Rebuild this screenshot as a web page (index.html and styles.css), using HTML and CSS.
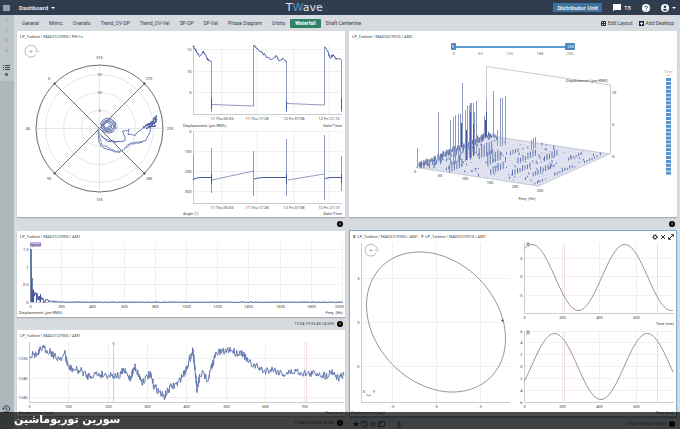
FILE: index.html
```html
<!DOCTYPE html>
<html lang="en">
<head>
    <meta charset="utf-8">
    <title>TWave - Dashboard</title>
    <link rel="stylesheet" href="styles.css">
</head>
<body>
<header class="topbar">
    <div class="topbar-left">
        <button class="icon-btn" aria-label="Menu"><svg class="menu" viewBox="0 0 7 6"><path d="M0 1h7M0 3h7M0 5h7"/></svg></button>
        <button class="board-name">Dashboard <span class="caret"></span></button>
    </div>
    <div class="logo">T<span>W</span>ave</div>
    <div class="topbar-right">
        <button class="unit">Distributor Unit</button>
        <button class="messages"><svg viewBox="0 0 8 7"><path d="M0 0h8v6H2L0 7z"/></svg>T8</button>
        <button class="icon-btn" aria-label="Help"><svg viewBox="0 0 8 8"><circle cx="4" cy="4" r="4"/><path class="cut" d="M2.7 3.2a1.3 1.2 0 1 1 1.9 1.1q-.6.3-.6.9M4 6v.8"/></svg></button>
        <button class="icon-btn user" aria-label="Account"><svg viewBox="0 0 8 8"><circle cx="4" cy="4" r="4"/><circle class="hole" cx="4" cy="2.8" r="1.3"/><path class="hole" d="M1.6 5.8q2.4-2 4.8 0Q4 8 1.6 5.8z"/></svg><span class="caret"></span></button>
    </div>
</header>
<div class="shell">
    <aside class="side">
        <div class="side-top">
            <i class="mark olive"></i>
            <i class="mark green"></i>
            <i class="mark red"></i>
            <i class="mark blue"></i>
            <svg class="side-list" viewBox="0 0 7 5"><path d="M0 .5h1M2 .5h5M0 2.5h1M2 2.5h5M0 4.5h1M2 4.5h5"/></svg>
            <i class="mark dark"></i>
        </div>
        <svg class="side-history" viewBox="0 0 8 8"><path d="M1.2 4a3.2 3.2 0 1 1 1 2.3M0 3.4l1.2 1.2 1.2-1.2M4.3 2.2v2l1.5 1"/></svg>
    </aside>
    <main class="main">
        <nav class="tabs">
            <button>General</button>
            <button>Mimic</button>
            <button>Overalls</button>
            <button>Trend_OV-DP</button>
            <button>Trend_OV-Vel</button>
            <button>SP-DP</button>
            <button>SP-Vel</button>
            <button>Phase Diagram</button>
            <button>Orbits</button>
            <button class="active">Waterfall</button>
            <button>Shaft Centerline</button>
            <div class="tab-tools">
                <button><svg viewBox="0 0 5 5"><path d="M.5.5h4v4h-4zM.5 2.5h4M2.5.5v4"/></svg>Edit Layout</button>
                <button><svg viewBox="0 0 5 5"><path class="solid" d="M0 0h5v5H0z"/><path class="plus" d="M2.5 1v3M1 2.5h3"/></svg>Add Desktop</button>
            </div>
        </nav>
        <div class="board">
            <div class="column">
                <section class="card">
                    <h2>LP_Turbine / MAD31CY005 / PH-1x</h2>
                    <svg class="chart" id="phase" viewBox="17 42 328 175"></svg>
                </section>
                <div class="foot tall"><button class="info">i</button></div>
                <section class="card">
                    <h2>LP_Turbine / MAD31CY005 / AM1</h2>
                    <svg class="chart" id="spectrum" viewBox="17 242 328 75"></svg>
                </section>
                <div class="foot"><span>13:04:19 03:43:14.593</span><button class="info">i</button></div>
                <section class="card">
                    <h2>LP_Turbine / MAD31CY005 / AM1</h2>
                    <svg class="chart" id="wave" viewBox="17 341 328 75"></svg>
                </section>
                <div class="foot"><span>13:04:19 03:43:14.593</span><button class="info">i</button></div>
            </div>
            <div class="column">
                <section class="card">
                    <h2>LP_Turbine / MAD32CY010 / AM2</h2>
                    <div class="range">
                        <div class="range-track">
                            <input type="range" min="0" max="250" value="0" aria-label="From frequency">
                            <input type="range" class="to" min="0" max="250" value="250" aria-label="To frequency">
                            <span class="from-val">0</span><span class="to-val">250</span>
                        </div>
                        <div class="range-ticks"><span>0</span><span>63</span><span>125</span><span>188</span><span>250</span></div>
                    </div>
                    <svg class="chart" id="waterfall" viewBox="349 58 328 159"></svg>
                </section>
                <div class="foot"><button class="info">i</button></div>
                <section class="card selected">
                    <div class="card-head">
                        <h2><b>X</b>LP_Turbine / MAD31CY005 / AM1</h2>
                        <h2><b>Y</b>LP_Turbine / MAD31CY010 / AM1</h2>
                        <div class="card-tools">
                            <button aria-label="Settings"><svg viewBox="0 0 6 6"><circle class="gear" cx="3" cy="3" r="2.4"/><circle cx="3" cy="3" r="1.6"/></svg></button>
                            <button aria-label="Close"><svg viewBox="0 0 6 6"><path d="M1 1l4 4M5 1L1 5"/></svg></button>
                            <button aria-label="Expand"><svg viewBox="0 0 6 6"><path d="M1 5l4-4M3.2.6h2.2v2.2M.6 3.2v2.2h2.2"/></svg></button>
                        </div>
                    </div>
                    <svg class="chart" id="orbit" viewBox="350 242 326 174"></svg>
                </section>
                <div class="foot">
                    <svg class="foot-icons" viewBox="0 0 50 8"><path class="solid" d="M3 1l1 2h2L4.500 4.500 5 6.500 3 5.400 1 6.500l.500-2L0 3h2z"/><path d="M8.500 4a3 3 0 1 0 1-2M8.500 1v2h2M12 2.500V4l1 1M18 4a2 2 0 0 1 4 0 2 2 0 0 1-4 0M25.500 1.500h6v5h-6zM27 5V3h2M46 1v4M44 3.500l2 2 2-2M43.500 7h5"/></svg>
                    <span>13:04:19 03:43:14.593</span><button class="info">i</button>
                </div>
            </div>
        </div>
    </main>
</div>
<div class="caption" lang="fa" dir="rtl">سورین توربوماشین</div>
<script src="charts.js"></script>
</body>
</html>
```

FILE: styles.css
```css
* {
    box-sizing: border-box;
}

body {
    margin: 0;
    min-height: 100vh;
    display: flex;
    flex-direction: column;
    font-family: Roboto, "Liberation Sans", sans-serif;
    font-size: 5px;
    line-height: 6px;
    color: #3a4048;
    background: #d7dadf;
}

button {
    border: 0;
    padding: 0;
    background: none;
    color: inherit;
    font: inherit;
    display: flex;
    align-items: center;
    gap: 3px;
    white-space: nowrap;
}

svg {
    display: block;
}

/* top bar */
.topbar {
    height: 15px;
    padding: 0 4px 0 3px;
    display: flex;
    justify-content: space-between;
    align-items: center;
    background: #303d4f;
    color: #fff;
}

.topbar-left {
    display: flex;
    gap: 9px;
}

.topbar-right {
    display: flex;
    align-items: center;
    gap: 11px;
}

.menu {
    width: 7px;
    height: 6px;
    stroke: #fff;
}

.board-name {
    font-size: 6px;
    font-weight: 500;
}

.caret {
    border: 2px solid transparent;
    border-top-color: #fff;
    border-bottom: 0;
}

.logo {
    font-family: "DejaVu Sans", sans-serif;
    font-size: 11px;
    line-height: 14px;
    color: #dfe5ea;
}

.logo span {
    color: #4f9cc4;
}

.unit {
    height: 9px;
    padding: 0 4px;
    background: #3f719d;
    font-size: 6px;
    font-weight: 500;
}

.messages {
    font-size: 6px;
}

.messages svg {
    width: 8px;
    height: 7px;
    fill: #fff;
}

.icon-btn svg {
    width: 8px;
    height: 8px;
    fill: #fff;
}

.icon-btn .menu {
    width: 7px;
    height: 6px;
}

.icon-btn .cut {
    fill: none;
    stroke: #303d4f;
}

.icon-btn .hole {
    fill: #303d4f;
}

/* side bar */
.shell {
    flex: 1;
    display: flex;
}

.side {
    width: 14px;
    display: flex;
    flex-direction: column;
    justify-content: space-between;
    background: #aeb8bc;
}

.side-top {
    height: 66px;
    padding: 4px 5px;
    display: flex;
    flex-direction: column;
    gap: 7px;
    background: #bcc5c8;
}

.side-list {
    width: 7px;
    height: 5px;
    margin: 6px -2px 0;
    stroke: #39444c;
}

.side-history {
    width: 8px;
    height: 8px;
    margin: 0 2px 17px;
    fill: none;
    stroke: #2e4656;
}

.mark {
    width: 3px;
    height: 3px;
    flex: none;
    border-radius: 1px;
}

.olive { background: #b5b98e; }
.green { background: #a5c09a; }
.red { background: #c9a58f; }
.blue { background: #8fb9d3; }
.dark { background: #56646d; margin-top: -4px; }

/* tabs */
.main {
    flex: 1;
    min-width: 0;
    padding: 0 3px;
}

.tabs {
    height: 16px;
    display: flex;
    align-items: center;
}

.tabs button {
    height: 9px;
    padding: 0 5px;
    border-radius: 1px;
}

.tabs .active {
    background: #2f8262;
    color: #fff;
    font-weight: 700;
}

.tab-tools {
    margin-left: auto;
    display: flex;
}

.tabs .tab-tools button {
    padding: 0 3px;
    gap: 2px;
}

.tab-tools svg {
    width: 5px;
    height: 5px;
    fill: none;
    stroke: #2b333c;
}

.tab-tools .solid {
    fill: #1f2730;
    stroke: none;
}

.tab-tools .plus {
    stroke: #fff;
}

/* cards */
.board {
    display: grid;
    grid-template-columns: 1fr 1fr;
    gap: 4px;
}

.card {
    background: #fff;
    box-shadow: 0 1px 1px #a9acb0;
}

.selected {
    border: 1px solid #7fadd0;
}

h2 {
    margin: 0;
    height: 11px;
    padding: 0 3px;
    font-size: 4px;
    line-height: 12px;
    font-weight: 400;
    white-space: nowrap;
}

h2 b {
    margin-right: 2px;
}

.card-head {
    display: flex;
}

.card-head h2 {
    padding: 0 0 0 3px;
}

.card-tools {
    margin-left: auto;
    padding-right: 2px;
    display: flex;
    gap: 2px;
}

.card-tools svg {
    width: 6px;
    height: 6px;
    fill: none;
    stroke: #333;
}

.card-tools .gear {
    stroke-dasharray: 1 1;
}

.chart {
    width: 100%;
    height: auto;
}

.foot {
    height: 13px;
    padding: 0 2px 0 4px;
    display: flex;
    align-items: center;
    justify-content: flex-end;
    gap: 3px;
    font-size: 4px;
}

.tall {
    height: 14px;
}

.foot-icons {
    width: 50px;
    height: 8px;
    margin-right: auto;
    fill: none;
    stroke: #555;
}

.foot-icons .solid {
    fill: #444;
    stroke: none;
}

.info {
    width: 6px;
    height: 6px;
    border-radius: 50%;
    justify-content: center;
    background: #000;
    color: #fff;
    font-size: 4px;
    font-weight: 700;
}

/* frequency range */
.range {
    width: 38%;
    height: 16px;
    margin-left: 31%;
}

.range-track {
    position: relative;
    height: 9px;
    display: flex;
    align-items: center;
    justify-content: space-between;
    color: #fff;
    font-size: 4px;
}

.range-track::before {
    content: "";
    position: absolute;
    left: 2px;
    right: 2px;
    top: 4px;
    height: 2px;
    background: #5b9bd5;
}

.range-track input {
    position: absolute;
    left: 0;
    top: 0;
    width: 100%;
    height: 9px;
    margin: 0;
    appearance: none;
    background: none;
    pointer-events: none;
}

.range-track input::-webkit-slider-thumb {
    appearance: none;
    width: 5px;
    height: 7px;
    border-radius: 1px;
    background: #4a86c0;
    pointer-events: auto;
}

.range-track .to::-webkit-slider-thumb {
    width: 10px;
}

.range-track span {
    position: relative;
    padding: 0 1px;
    pointer-events: none;
}

.range-ticks {
    display: flex;
    justify-content: space-between;
    padding: 0 2px;
    font-size: 4px;
    color: #777;
}

/* chart parts */
.chart text {
    font-size: 4px;
    fill: #444;
}

.chart .italic {
    font-style: italic;
}

.chart .faint {
    fill: #d09a8a;
}

.chart path {
    fill: none;
    stroke-linejoin: round;
}

.grid { stroke: #f0f0f3; stroke-width: 1; }
.axis { stroke: #c9ccd2; stroke-width: 1; }
.ring { stroke: #e6e6e8; stroke-width: 1; }
.dark-line { stroke: #6c6c70; stroke-width: 1; }
.line { stroke: #6478b0; stroke-width: 1; }
.thin { stroke: #8f9bc0; stroke-width: 1; }
.dense { stroke: #45589f; stroke-width: 1; }
.curve { stroke: #94949c; stroke-width: 1; }
.pink { stroke: #f3dbe3; stroke-width: 1; }
.cursor { stroke: #cfcfd4; stroke-width: 1; }
.mesh { stroke: #d6d9ea; stroke-width: 1; }
.floor { fill: #eceef6; }
.tag { fill: #c9b6ea; }
.axis-tag { fill: #d5d5d8; }
.time-cell { fill: #4f94cf; }
.dot { fill: #333; }
.rotor { stroke: #b5b5b8; stroke-width: 1; }

/* bottom caption */
.caption {
    position: fixed;
    left: 0;
    right: 0;
    bottom: 0;
    height: 17px;
    padding: 0 14px;
    background: rgba(0, 0, 0, .7);
    color: #fff;
    font-family: "DejaVu Sans", sans-serif;
    font-size: 11px;
    font-weight: 700;
    line-height: 15px;
    text-align: end;
}
```

FILE: charts.js
```js
var NS = 'http://www.w3.org/2000/svg';
var seed = 7;

function rnd() {
    seed = (seed * 16807) % 2147483647;
    return seed / 2147483647;
}

function add(id, tag, attrs, text) {
    var el = document.createElementNS(NS, tag);
    for (var k in attrs) el.setAttribute(k, attrs[k]);
    if (text !== undefined) el.textContent = text;
    document.getElementById(id).appendChild(el);
}

function path(id, cls, d) {
    add(id, 'path', {'class': cls, d: d});
}

function label(id, x, y, text, anchor, cls) {
    add(id, 'text', {x: x, y: y, 'text-anchor': anchor || 'middle', 'class': cls || ''}, text);
}

function poly(pts) {
    return 'M' + pts.map(function (p) { return p[0].toFixed(1) + ' ' + p[1].toFixed(1); }).join('L');
}

// walk along the key points and shake every step by amp
function noisy(keys, amp, step) {
    var out = [];
    for (var i = 0; i < keys.length - 1; i++) {
        var a = keys[i], b = keys[i + 1];
        var n = Math.max(1, Math.round(Math.hypot(b[0] - a[0], b[1] - a[1]) / step));
        for (var j = 0; j < n; j++) {
            out.push([a[0] + (b[0] - a[0]) * j / n, a[1] + (b[1] - a[1]) * j / n + (rnd() - .5) * amp * 2]);
        }
    }
    out.push(keys[keys.length - 1]);
    return out;
}

// plot frame: b = [left, top, right, bottom], xs and ys = [[position, label], ...]
function frame(id, b, xs, ys) {
    xs.forEach(function (t) {
        if (t[0] > b[0]) path(id, 'grid', 'M' + t[0] + ' ' + b[1] + 'V' + b[3]);
        // a label on the right edge is kept inside the plot
        var edge = t[0] > b[2] - 4;
        label(id, edge ? b[2] + 1 : t[0], b[3] + 5, t[1], edge ? 'end' : 'middle');
    });
    ys.forEach(function (t) {
        if (t[0] < b[3]) path(id, 'grid', 'M' + b[0] + ' ' + t[0] + 'H' + b[2]);
        label(id, b[0] - 2, t[0] + 1, t[1], 'end');
    });
    path(id, 'axis', 'M' + b[0] + ' ' + b[1] + 'V' + b[3] + 'H' + b[2]);
}

function rotor(id, x, y) {
    path(id, 'rotor', 'M' + (x + 5) + ' ' + (y + 3) + 'A6 6 0 1 1 ' + (x + 6) + ' ' + (y - 1) + 'M' + (x + 4) + ' ' + (y - 1) + 'l2 2 2-2M' + (x - 1.5) + ' ' + y + 'h3M' + x + ' ' + (y - 1.5) + 'v3');
}

// ---- phase diagram
(function () {
    var id = 'phase', cx = 99.5, cy = 128.5;
    rotor(id, 31, 51.5);
    [18, 36, 54].forEach(function (r) {
        add(id, 'circle', {cx: cx, cy: cy, r: r, 'class': 'ring', fill: 'none'});
    });
    path(id, 'ring', 'M36 128.5H163M99.5 65V192');
    add(id, 'circle', {cx: cx, cy: cy, r: 63.5, 'class': 'dark-line', fill: 'none'});
    path(id, 'dark-line', 'M54.500 83.500l90 90M144.500 83.500l-90 90');
    [[54.5, 83.5], [144.5, 83.5], [54.5, 173.5], [144.5, 173.5]].forEach(function (p) {
        add(id, 'circle', {cx: p[0], cy: p[1], r: 1, 'class': 'dot'});
    });
    [[99.5, 59, '315'], [49, 80, '0'], [149, 80, '270'], [28, 130, '45'], [170, 130, '225'],
        [49, 180, '90'], [149, 180, '180'], [99.5, 201, '135'],
        [99.5, 76, '15'], [99.5, 94, '10'], [99.5, 112, '5']].forEach(function (t) {
        label(id, t[0], t[1], t[2]);
    });
    var sp = [];
    for (var a = 0; a < 34; a += .3) {
        var r = 1.5 + a * .18 + rnd() * 1.5;
        sp.push([107 + a * .05 + r * Math.cos(a), 125.5 + r * Math.sin(a) * .9]);
    }
    path(id, 'line', poly(sp));
    path(id, 'line', poly(noisy([[98, 129], [99, 142], [102, 147], [115, 152], [123, 150], [129, 144], [138, 143], [146, 140], [150, 132], [151, 126]], .5, 2)));
    path(id, 'thin', poly(noisy([[98, 131], [102, 145], [112, 149], [119, 153], [127, 147], [132, 143], [144, 141]], .5, 2)));
    path(id, 'line', poly(noisy([[98, 131], [103, 138], [110, 141], [119, 142], [125, 140], [125, 136], [122, 131], [129, 130], [128, 135], [135, 135], [141, 130], [147, 125]], .7, 2)));
    path(id, 'line', poly(noisy([[102, 136], [108, 142], [118, 141]], 1, 2)));
    path(id, 'dense', poly(noisy([[143, 127], [157, 122], [146, 128], [156, 125], [149, 126], [157, 120], [153, 118], [157, 115], [155, 120], [147, 125], [155, 122]], 1.5, 1)));

    var xs = [[222, '11 Thu 05:55'], [257, '11 Thu 17:28'], [294, '12 Fri 07:08'], [329, '12 Fri 21:13']];
    frame(id, [193.5, 45, 342, 114.5], xs, [[49.5, '15'], [71.5, '10'], [92.5, '5']]);
    path(id, 'thin', 'M211.500 61V112M212 104.500L253.500 106V46M286.500 61V112M287 103.500L324.500 105V47M341.500 60V112');
    path(id, 'dense', poly(noisy([[193, 46], [198, 54], [200, 56], [203, 52], [206, 56], [208, 60], [211, 61]], 1.2, .8)));
    path(id, 'dense', poly(noisy([[253.5, 45], [260, 51], [266, 56], [271, 60], [275, 58], [276, 55], [279, 60], [284, 59], [286, 62]], 1, .8)));
    path(id, 'dense', poly(noisy([[324.5, 47], [328, 52], [330, 58], [333, 55], [336, 59], [338, 58], [341, 60]], 1, .8)));
    path(id, 'dense', 'M211.500 98V109M286.500 101V110M341.500 98V110');
    label(id, 183, 127, 'Displacement (µm RMS)', 'start');
    label(id, 342, 127, 'Date/Time', 'end');

    frame(id, [193.5, 131, 342, 203.5], xs, [[131.5, '0'], [151.5, '100'], [171.5, '200'], [191.5, '300']]);
    path(id, 'thin', 'M193.500 155V180M211.500 148V193M212 180L253.500 171M253.500 151V196M286.500 139V196M288 180L324 174M324.500 135V200M341.500 156V191');
    path(id, 'dense', 'M193 180L195 178.500 200 177.500H211M254 179L258 178 264 177.500H286M325 178.500L330 177.500H341M211.500 174V184M286.500 174V184M341.500 174V183');
    label(id, 183, 215, 'Angle (°)', 'start');
    label(id, 342, 215, 'Date/Time', 'end');
})();

// ---- spectrum
(function () {
    var id = 'spectrum', xs = [], i;
    for (i = 0; i <= 10; i++) xs.push([Math.round(30 + i * 31.2) + .5, i * 200]);
    frame(id, [30.5, 242, 343, 302.5], xs, [[249.5, '1.5'], [267.5, '1'], [284.5, '0.5'], [302.5, '0']]);
    add(id, 'rect', {x: 30, y: 242, width: 11, height: 5, 'class': 'tag'});
    label(id, 35.5, 246, 'Speed');
    var pts = [[31, 302], [31, 249], [31.5, 302], [32, 278], [32.5, 302]];
    for (i = 33; i < 343; i += .5) {
        pts.push([i, 302.5 - rnd() * (14 * Math.exp(-(i - 33) / 9) + .7)]);
    }
    path(id, 'dense', poly(pts));
    path(id, 'dense', 'M33.500 302V290M36.500 302V293M40.500 302V294');
    label(id, 19, 314, 'Displacement (µm RMS)', 'start');
    label(id, 343, 314, 'Freq. (Hz)', 'end');
})();

// ---- time wave
(function () {
    var id = 'wave', xs = [];
    for (var i = 0; i < 8; i++) xs.push([Math.round(29 + i * 39.3) + .5, i * 100]);
    frame(id, [29.5, 342, 344, 402.5], xs, [[358.5, '-1235'], [378.5, '-1240'], [397.5, '-1245']]);
    path(id, 'cursor', 'M113.500 342V402');
    path(id, 'pink', 'M306.500 342V402');
    label(id, 113, 345, '✎');
    path(id, 'line', poly(noisy([[29, 356], [34, 354], [38, 355], [41, 348], [50, 351], [56, 358], [62, 357], [65, 354], [68, 367],
        [75, 370], [82, 371], [87, 376], [95, 374], [113, 375], [120, 376], [123, 370], [130, 378], [135, 367], [142, 382],
        [150, 374], [154, 386], [164, 397], [170, 388], [178, 383], [186, 370], [193, 350], [197, 390], [200, 375], [203, 374],
        [208, 379], [216, 353], [224, 352], [230, 349], [236, 353], [242, 352], [248, 362], [256, 366], [264, 371], [272, 369],
        [284, 374], [296, 371], [308, 374], [318, 373], [326, 376], [332, 371], [338, 378], [344, 375]], 4, .8)));
    label(id, 19, 414, 'Displacement (µm)', 'start');
    label(id, 343, 414, 'Time (ms)', 'end');
})();

// ---- waterfall
(function () {
    var id = 'waterfall', i;
    // u runs along the frequency axis, v along time
    function at(u, v) {
        return [416.5 + u * 122 + v * 71, 167.5 + u * 18.5 - v * 32];
    }
    path(id, 'axis', 'M486.500 136V66.500L610.500 85V154.500');
    add(id, 'polygon', {'class': 'floor', points: [at(0, 0), at(1, 0), at(1, 1), at(0, 1)].join(' ')});
    for (i = 0; i <= 26; i++) {
        path(id, 'mesh', poly([at(0, i / 26), at(1, i / 26)]));
    }
    path(id, 'axis', poly([at(0, 0), at(1, 0), at(1, 1), at(0, 1)]));
    var d = '';
    for (i = 0; i < 210; i++) {
        var p = at(rnd() * rnd() * .12, i / 210);
        d += 'M' + p[0].toFixed(1) + ' ' + p[1].toFixed(1) + 'v-' + (1 + rnd() * 4).toFixed(1);
    }
    path(id, 'line', d);
    // harmonics: [frequency, first time, last time, height]
    d = '';
    [[.27, 0, .18, 11], [.27, .42, .62, 12], [.41, .3, .5, 12], [.41, .62, .76, 4], [.55, .1, .3, 7], [.57, .45, .7, 6],
        [.7, .15, .4, 5], [.7, .6, .8, 7], [.84, .2, .45, 5], [.84, .7, .9, 3], [.96, .02, .16, 2], [.96, .3, .55, 3], [.97, .7, .9, 2]].forEach(function (h) {
        for (var v = h[1]; v < h[2]; v += .035) {
            var q = at(h[0], v);
            d += 'M' + q[0].toFixed(1) + ' ' + q[1].toFixed(1) + 'v-' + (h[3] * (.7 + rnd() * .5)).toFixed(1);
        }
    });
    for (i = 0; i < 120; i++) {
        var s = at(.1 + rnd() * .88, rnd());
        d += 'M' + s[0].toFixed(1) + ' ' + s[1].toFixed(1) + 'v-' + (rnd() * 3).toFixed(1);
    }
    path(id, 'line', d);
    path(id, 'thin', [[417, 148, 167], [438, 112, 162], [450, 120, 164], [453, 117, 165], [455, 115, 164], [458, 114, 162], [460, 114, 160],
        [462, 83, 146], [465, 110, 162], [467, 106, 160], [469, 105, 158], [470, 103, 160], [471, 103, 158], [473, 103, 156],
        [474, 112, 155], [476, 101, 154], [484, 116, 138], [486, 100, 136], [493, 91, 136], [497, 130, 146], [500, 98, 146], [502, 98, 146],
        [505, 96, 145], [531, 140, 150], [533, 138, 149], [535, 137, 148]].map(function (s) {
        return 'M' + (s[0] + .5) + ' ' + s[1] + 'V' + s[2];
    }).join(''));
    path(id, 'dense', 'M470.500 112V158M473.500 124V156M461.500 123V147M486.500 112V136M485.500 120V137M466.500 130V160');
    for (i = 0; i < 6; i++) {
        label(id, 415 + i * 25, 173 + i * 3.7, i * 50);
    }
    label(id, 527, 200, 'Freq. (Hz)', 'middle', 'italic');
    label(id, 608, 82, 'Displacement (µm RMS)', 'end', 'italic');
    label(id, 614, 94, '10');
    label(id, 613, 126, '5');
    label(id, 613, 158, '0');
    label(id, 668.5, 73, 'Time', 'middle', 'faint');
    path(id, 'axis', 'M667 75.500h3');
    for (i = 0; i < 25; i++) {
        add(id, 'rect', {x: 666, y: 78 + i * 3.9, width: 5, height: 3, 'class': 'time-cell'});
    }
})();

// ---- orbit and its two waves
(function () {
    var id = 'orbit', pts = [], i;
    frame(id, [361.5, 243, 510, 402.5], [[392.5, '-3'], [436.5, '0'], [480.5, '3']], [[278.5, '3'], [322.5, '0'], [366.5, '-3']]);
    rotor(id, 371, 250.5);
    for (i = 0; i <= 120; i++) {
        var t = i * Math.PI / 60;
        pts.push([436 + 69.5 * Math.cos(t), 322 + 70 * Math.cos(t - 1.33)]);
    }
    path(id, 'curve', poly(pts));
    add(id, 'circle', {cx: 502.5, cy: 320.5, r: 1, 'class': 'dot'});
    label(id, 364, 393, 'X');
    label(id, 374, 393, 'Y');
    path(id, 'curve', 'M366 394q2 3 5 1');
    label(id, 351, 414, 'Displacement (µm)', 'start');

    function sine(top, bottom, mid, amp, peak, ys, name) {
        frame(id, [524.5, top, 674, bottom], [[524.5, 0], [562.5, 200], [599.5, 400], [636.5, 600]], ys);
        path(id, 'pink', 'M564.500 ' + top + 'V' + bottom + 'M657.500 ' + top + 'V' + bottom);
        var p = [];
        for (var x = 524.5; x <= 674; x += 1.5) {
            p.push([x, mid - amp * Math.cos((x - peak) / 92.8 * 2 * Math.PI)]);
        }
        path(id, 'curve', poly(p));
        add(id, 'rect', {x: 526, y: top - 1, width: 4, height: 5, 'class': 'axis-tag'});
        label(id, 528, top + 3, name);
    }

    sine(243, 313.5, 277.5, 33, 532, [[258.5, '5'], [276.5, '0'], [295.5, '-5']], 'X');
    label(id, 674, 325, 'Time (ms)', 'end');
    sine(331, 402.5, 366.5, 33, 554.5, [[331.5, '6'], [342.5, '4'], [354.5, '2'], [366.5, '0'], [378.5, '-2'], [390.5, '-4'], [402.5, '-6']], 'Y');
    label(id, 674, 414, 'Time (ms)', 'end');
})();
```
